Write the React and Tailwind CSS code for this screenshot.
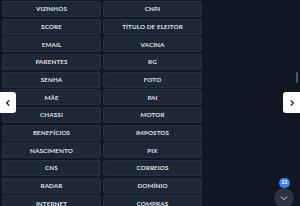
import React from "react";

const left = ["VIZINHOS", "SCORE", "EMAIL", "PARENTES", "SENHA", "MÃE", "CHASSI", "BENEFÍCIOS", "NASCIMENTO", "CNS", "RADAR", "INTERNET"];
const right = ["CNPJ", "TÍTULO DE ELEITOR", "VACINA", "RG", "FOTO", "PAI", "MOTOR", "IMPOSTOS", "PIX", "CORREIOS", "DOMÍNIO", "COMPRAS"];

export default function App() {
  const items = [];
  left.forEach((l, i) => {
    items.push(l);
    items.push(right[i]);
  });

  return (
    <div className="relative w-[300px] h-[206px] overflow-hidden bg-[#111722]" style={{ fontFamily: "Lato, 'Open Sans', sans-serif" }}>
      <div className="pl-[2px] pt-[1px]">
        <div className="grid w-[200px] grid-cols-2 gap-x-[2px] gap-y-[1.67px] auto-rows-[16px]">
          {items.map((name) => (
            <div
              key={name}
              className="flex items-center justify-center rounded-[2px] border border-[#243041] bg-[#1d2736] text-[6.3px] font-bold tracking-[0.1px] text-[#dde2ea]"
            >
              {name}
            </div>
          ))}
        </div>
      </div>

      {/* scrollbar thumb */}
      <div className="absolute right-[2px] top-[72px] h-[11px] w-[2px] rounded-full bg-[#4b5563]" />

      {/* side arrows */}
      <button className="absolute left-0 top-[92px] flex h-[21px] w-[16px] items-center justify-center rounded-r-[3px] bg-white">
        <svg width="8" height="8" viewBox="0 0 24 24" fill="none" stroke="#111" strokeWidth="3.5" strokeLinecap="round" strokeLinejoin="round">
          <path d="M15 5l-7 7 7 7" />
        </svg>
      </button>
      <button className="absolute right-0 top-[92px] flex h-[21px] w-[17px] items-center justify-center rounded-l-[3px] bg-white">
        <svg width="8" height="8" viewBox="0 0 24 24" fill="none" stroke="#111" strokeWidth="3.5" strokeLinecap="round" strokeLinejoin="round">
          <path d="M9 5l7 7-7 7" />
        </svg>
      </button>

      {/* scroll down button with badge */}
      <div className="absolute left-[274px] top-[188px] flex h-[20px] w-[20px] items-center justify-center rounded-full bg-[#2b3441]">
        <svg width="10" height="10" viewBox="0 0 24 24" fill="none" stroke="#9aa3b0" strokeWidth="2.5" strokeLinecap="round" strokeLinejoin="round">
          <path d="M5 9l7 7 7-7" />
        </svg>
      </div>
      <div className="absolute left-[279px] top-[178px] flex h-[10px] w-[11px] items-center justify-center rounded-full bg-[#3b82f6] text-[5px] font-bold text-white">
        22
      </div>
    </div>
  );
}
